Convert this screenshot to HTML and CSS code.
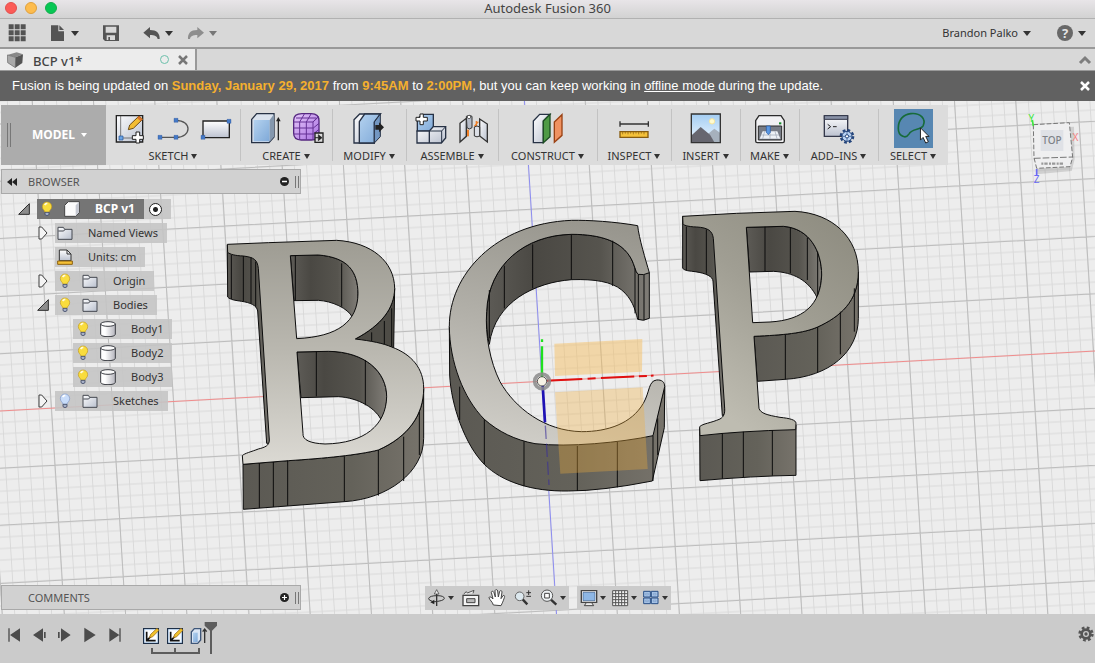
FILE: index.html
```html
<!DOCTYPE html>
<html lang="en">
<head>
<meta charset="utf-8">
<title>Autodesk Fusion 360</title>
<link rel="stylesheet" href="styles.css">
</head>
<body>
<svg class="defs" aria-hidden="true">
  <defs>
    <linearGradient id="blue" x1="0" y1="0" x2="1" y2="1"><stop offset="0" stop-color="#b4d2ef"/><stop offset="1" stop-color="#7fa9d8"/></linearGradient>
    <linearGradient id="pale" x1="0" y1="0" x2="1" y2="1"><stop offset="0" stop-color="#fdfdfe"/><stop offset="1" stop-color="#b9c0ce"/></linearGradient>
    <linearGradient id="sheet" x1="0" y1="0" x2="0" y2="1"><stop offset="0" stop-color="#ffffff"/><stop offset="1" stop-color="#bcc2d0"/></linearGradient>
    <linearGradient id="violet" x1="0" y1="0" x2="1" y2="1"><stop offset="0" stop-color="#e6c8fa"/><stop offset="1" stop-color="#a76ee0"/></linearGradient>
    <linearGradient id="sky" x1="0" y1="0" x2="0" y2="1"><stop offset="0" stop-color="#a3cdf2"/><stop offset="1" stop-color="#eff8ff"/></linearGradient>
    <linearGradient id="can" x1="0" y1="0" x2="1" y2="0"><stop offset="0" stop-color="#ffffff"/><stop offset=".3" stop-color="#ffffff"/><stop offset="1" stop-color="#b4b4bc"/></linearGradient>
  </defs>
  <symbol id="bulb" viewBox="0 0 36 48">
    <path d="M18 3a14 14 0 0 0-14 14c0 8 7 10 8 17h12c1-7 8-9 8-17A14 14 0 0 0 18 3Z" fill="#f9dc3c" stroke="#c39a1d" stroke-width="2"/>
    <path d="M11 12q3-5 8-5" fill="none" stroke="#fffbe0" stroke-width="5"/>
    <path d="M12 34h12v7q-6 6-12 0Z" fill="#a9b2c9" stroke="#3f4864" stroke-width="2.500"/>
  </symbol>
  <symbol id="bulb-off" viewBox="0 0 36 48">
    <path d="M18 3a14 14 0 0 0-14 14c0 8 7 10 8 17h12c1-7 8-9 8-17A14 14 0 0 0 18 3Z" fill="#c8dcfa" stroke="#7f96c6" stroke-width="2"/>
    <path d="M11 12q3-5 8-5" fill="none" stroke="#fff" stroke-width="5"/>
    <path d="M12 34h12v7q-6 6-12 0Z" fill="#a9b2c9" stroke="#3f4864" stroke-width="2.500"/>
  </symbol>
  <symbol id="folder" viewBox="0 0 48 48">
    <path d="M3 7h16l4 6h22v30H3Z" fill="url(#pale)" stroke="#444850" stroke-width="3" stroke-linejoin="round"/>
    <path d="M4 18h16l4-5" fill="none" stroke="#444850" stroke-width="3"/>
  </symbol>
  <symbol id="cylinder" viewBox="0 0 48 48">
    <path d="M2 9v31q2 7 22 7t22-7V9Z" fill="url(#can)" stroke="#3c3e44" stroke-width="3"/>
    <ellipse cx="24" cy="9" rx="22" ry="7" fill="#fafafa" stroke="#3c3e44" stroke-width="3"/>
  </symbol>
  <symbol id="closed" viewBox="0 0 30 42"><path d="M3 3v36h8L27 21 11 3Z" fill="#f4f4f4" stroke="#3c3c3c" stroke-width="3"/></symbol>
  <symbol id="open" viewBox="0 0 36 36"><path d="M34 2v32H2Z" fill="#8d8d8d" stroke="#2b2b2b" stroke-width="3"/></symbol>
</svg>

<header class="titlebar">
  <div class="lights"><i class="light red"></i><i class="light amber"></i><i class="light green"></i></div>
  <h1>Autodesk Fusion 360</h1>
</header>

<div class="appbar">
  <button class="tool" aria-label="Data panel"><svg width="18" height="18" viewBox="25 74 54 54"><path fill="#545454" d="M27 75h15v15H27zM45 75h15v15H45zM63 75h15v15H63zM27 93h15v15H27zM45 93h15v15H45zM63 93h15v15H63zM27 111h15v15H27zM45 111h15v15H45zM63 111h15v15H63z"/></svg></button>
  <button class="tool" aria-label="File"><svg width="18" height="18" viewBox="153 74 54 54"><path fill="#545454" d="M159 78h22v18h17v29h-39zM184 78l14 14h-14z"/></svg><span class="caret"></span></button>
  <button class="tool" aria-label="Save"><svg width="18" height="18" viewBox="309 74 54 54"><path fill="#545454" fill-rule="evenodd" d="M312 78h48v47h-42l-6-6zM320 82v18h32V82zM323 108v14h25v-14zM328 113h5v9h-5z"/></svg></button>
  <button class="tool" aria-label="Undo"><svg width="18" height="18" viewBox="430 74 54 54"><path fill="#545454" d="M431 100l20-17v9c20 0 30 10 29 27h-6c-2-9-9-12-23-12v10z"/></svg><span class="caret"></span></button>
  <button class="tool redo" aria-label="Redo"><svg width="18" height="18" viewBox="564 74 54 54"><path fill="#8e8e8e" d="M615 100l-20-17v9c-20 0-29 10-28 27h6c2-9 8-12 22-12v10z"/></svg><span class="caret dim"></span></button>
  <div class="account">
    <button class="tool">Brandon Palko<span class="caret"></span></button>
    <button class="tool help" aria-label="Help"><b class="question">?</b><span class="caret"></span></button>
  </div>
</div>

<div class="tabs">
  <div class="tab">
    <svg width="16" height="16" viewBox="21 153 48 48"><path d="M22 162l28-8 19 6-22 9z" fill="#888"/><path d="M22 162l25 7-1 31-23-15z" fill="#a9a9a9" stroke="#666" stroke-width="2"/><path d="M47 169l22-9-2 26-21 14z" fill="#555"/></svg>
    <span class="tab-name">BCP v1*</span>
    <i class="ring"></i>
    <button class="plain" aria-label="Close tab"><svg width="12" height="12" viewBox="0 0 12 12"><path d="M2 2l8 8M10 2l-8 8" stroke="#777" stroke-width="2.500"/></svg></button>
  </div>
  <button class="plain" aria-label="Collapse"><svg width="14" height="12" viewBox="0 0 14 12"><path d="M2 9l5-5 5 5" fill="none" stroke="#7d7d7d" stroke-width="3"/></svg></button>
</div>

<div class="banner">
  <p>Fusion is being updated on <b>Sunday, January 29, 2017</b> from <b>9:45AM</b> to <b>2:00PM</b>, but you can keep working in <a href="#offline">offline mode</a> during the update.</p>
  <button class="plain" aria-label="Dismiss"><svg width="12" height="12" viewBox="0 0 12 12"><path d="M2 2l8 8M10 2l-8 8" stroke="#fff" stroke-width="2.500"/></svg></button>
</div>

<main class="viewport">
  <svg class="scene" viewBox="0 101 1095 513" preserveAspectRatio="xMidYMid slice" role="img" aria-label="Three extruded letter bodies on a grid">
    <defs>
      <pattern id="minor" patternUnits="userSpaceOnUse" x="-6.130" y="-5.720" width="12.260" height="11.440" patternTransform="matrix(1 -.0548 .0625 1 541.500 381.300)">
        <path d="M6.130 0V11.440M0 5.720H12.260" stroke="#d8d8d8" stroke-width=".9"/>
      </pattern>
      <linearGradient id="faceB" x1="0" y1="0" x2="0" y2="1"><stop offset="0" stop-color="#9e9c93"/><stop offset=".5" stop-color="#bab8b0"/><stop offset="1" stop-color="#dbd9d3"/></linearGradient>
      <linearGradient id="faceC" x1=".6" y1="0" x2=".4" y2="1"><stop offset="0" stop-color="#98968e"/><stop offset=".5" stop-color="#b2b0a9"/><stop offset="1" stop-color="#cfcdc7"/></linearGradient>
      <linearGradient id="faceP" x1="1" y1="0" x2=".4" y2="1"><stop offset="0" stop-color="#8c8a7e"/><stop offset=".5" stop-color="#a09e93"/><stop offset="1" stop-color="#bebcb1"/></linearGradient>
      <linearGradient id="wall" x1="0" y1="0" x2="1" y2="0"><stop offset="0" stop-color="#5b5953"/><stop offset=".6" stop-color="#64625a"/><stop offset="1" stop-color="#77736b"/></linearGradient>
      <linearGradient id="inner" x1="0" y1="0" x2="1" y2="0"><stop offset="0" stop-color="#5d5b56"/><stop offset=".3" stop-color="#4a4843"/><stop offset=".7" stop-color="#56544e"/><stop offset="1" stop-color="#807d77"/></linearGradient>
    </defs>
    <rect y="101" width="1095" height="513" fill="#ededed"/>
    <rect y="101" width="1095" height="513" fill="url(#minor)"/>
    <g transform="matrix(1 -.0548 .0625 1 541.500 381.300)">
      <path d="M-552-330V280M-490-330V280M-429-330V280M-368-330V280M-306-330V280M-245-330V280M-184-330V280M-123-330V280M-61-330V280M61-330V280M123-330V280M184-330V280M245-330V280M306-330V280M368-330V280M429-330V280M490-330V280M552-330V280M-600-286H600M-600-229H600M-600-172H600M-600-114H600M-600-57H600M-600 57H600M-600 114H600M-600 172H600M-600 229H600" stroke="#bdbdbd"/>
    </g>
    <path d="M0 411L1095 351" stroke="#f08c8c"/>
    <path d="M524.500 101L556.500 614" stroke="#8c8cf0"/>

    <g transform="translate(215 225) scale(.33333)" stroke="#0c0c0c" stroke-width="3" stroke-linejoin="round">
      <path fill="url(#inner)" d="M37 60L38 216C45 224 60 226 80 229C105 233 125 240 128 258L155 655L165 655L150 90Z"/>
      <path fill="#4e4c46" d="M421 342C500 300 538 250 539 190L536 368Z"/>
      <path fill="url(#wall)" d="M84 718L85 853L388 830C520 822 626 740 626 640V490C626 570 580 635 490 675C430 690 330 700 220 707Z"/>
      <path fill="url(#inner)" d="M226 92L310 90C400 97 428 140 429 205C429 230 425 255 412 277C400 250 350 228 310 226L237 227Z"/>
      <path fill="url(#inner)" d="M246 381L340 379C450 380 515 440 515 515C515 540 511 565 501 590C485 550 430 518 370 515L258 518Z"/>
      <path fill="url(#faceB)" fill-rule="evenodd" d="M37 58L160 53L365 46C470 52 538 110 539 190C538 250 500 300 421 342C470 348 505 355 530 366C590 388 626 430 626 490C626 570 580 635 490 675C430 690 330 700 220 707L133 714L84 718L82 692C88 685 110 680 130 672C150 667 163 662 163 645L130 130C127 105 118 97 85 93C60 92 45 88 38 82ZM226 92L310 90C400 97 428 140 429 205C428 290 370 335 245 341ZM246 381L340 379C450 380 515 440 515 515C513 600 450 655 330 657C285 655 262 645 264 625Z"/>
      <path fill="none" d="M49 90V222M85 93V229M108 97V236M122 110V245M241 91V226M380 115V245M470 322V348M508 288V358M530 250V364M304 380V514M451 405V541M133 714V849M175 711V846M218 707V842M388 694V830M490 675V812M566 635V768M613 560V690"/>
    </g>

    <g transform="translate(435 205) scale(.33333)" stroke="#0c0c0c" stroke-width="3" stroke-linejoin="round">
      <path fill="url(#wall)" d="M43 365L44 510C48 600 90 720 148 778C200 830 290 860 400 858Q500 858 652 828L688 668L689 545L652 692L300 690Z"/>
      <path fill="url(#inner)" d="M155 320C160 180 270 90 410 88C500 88 560 110 588 160C600 182 600 200 610 208L643 203V340Q625 350 608 343C600 310 590 280 560 255C530 230 480 222 410 224C300 232 180 290 163 418C155 390 153 350 155 320Z"/>
      <path fill="url(#faceC)" d="M608 62C540 50 460 45 410 46C180 55 42 210 43 365C44 470 85 580 148 643C190 680 240 705 300 716C400 728 560 712 654 692L689 545C689 530 680 524 665 525C640 528 645 560 625 595C590 655 520 680 440 680C330 678 240 610 195 530C165 470 150 390 155 320C160 180 270 90 410 88C500 88 560 110 588 160C600 182 600 200 610 208Q626 212 643 203C632 165 612 100 608 62Z"/>
      <path fill="none" d="M163 255V400M208 182V310M293 118V250M409 88V224M533 107V243M600 190V325M610 208V343M627 210V346M74 545V645M148 643V778M267 709V844M427 723V858M547 711V847M654 692V828M668 640V750"/>
    </g>

    <g transform="translate(670 195) scale(.33333)" stroke="#0c0c0c" stroke-width="3" stroke-linejoin="round">
      <path fill="url(#inner)" d="M38 64V220C45 228 60 228 75 230C110 235 128 245 129 258L157 662L165 655L150 92Z"/>
      <path fill="url(#wall)" d="M252 424L262 559L345 553C480 545 565 470 565 370V230C565 320 510 365 443 396C400 415 340 420 252 424Z"/>
      <path fill="url(#wall)" d="M89 700L90 857Q250 843 378 841V690Z"/>
      <path fill="url(#inner)" d="M229 97L340 94C420 100 455 170 455 240Q453 280 441 307C415 255 370 232 310 229L239 231Z"/>
      <path fill="url(#faceP)" fill-rule="evenodd" d="M38 64L200 55L375 49C490 55 565 130 565 230C565 320 510 365 443 396C400 415 340 420 252 424L267 640C272 655 290 660 330 667C360 670 378 675 378 685L377 704Q210 708 90 722L89 695C100 685 120 685 150 672C162 665 165 655 164 640L130 130C127 108 115 98 80 96C50 95 40 90 39 86ZM229 97L340 94C420 100 455 170 455 240C452 330 400 375 300 381L248 383Z"/>
      <path fill="none" d="M49 95V226M109 103V236M285 95V229M361 98V235M412 128V255M443 170V300M346 419V553M443 396V531M511 350V478M553 280V410M157 715V851M220 710V846M307 706V842"/>
    </g>

    <g transform="translate(435 205) scale(.33333)">
      <path d="M358 416L622 402L621 500L360 513Z" fill="#f7b84a" fill-opacity=".42"/>
      <path d="M360 562L623 547L638 792L376 806Z" fill="#f0ac3c" fill-opacity=".34"/>
      <path d="M330 527L715 509" stroke="#e01010" stroke-width="6" stroke-dasharray="112 16 24 16 100 14 24 12 8 999"/>
      <path d="M321 520V424M321 411V403" stroke="#1fe01f" stroke-width="7"/>
      <path d="M323 540L330 652" stroke="#1f12b4" stroke-width="8"/>
      <path d="M331 662L342 840" stroke="#3a2f9a" stroke-width="4" stroke-dasharray="40 14" opacity=".6"/>
      <circle cx="321" cy="529" r="22" fill="none" stroke="#8a8a8a" stroke-width="11" opacity=".85"/>
      <circle cx="321" cy="529" r="14" fill="#f6f2e6" stroke="#555" stroke-width="3"/>
    </g>
  </svg>

  <div class="top-row">
    <nav class="ribbon" aria-label="Modeling tools">
      <button class="model"><i class="grip"></i><span>MODEL</span><span class="caret light-caret"></span></button>

      <button class="group"><span class="icons">
        <svg viewBox="342 38 96 96"><path d="M349 46h79v79h-79z" fill="url(#pale)" stroke="#222" stroke-width="4"/><path d="M362 47v66h66" fill="none" stroke="#444" stroke-width="2"/><path d="M357 107h12v12h-12z" fill="#6aa5e6" stroke="#214f96" stroke-width="2"/><path d="M385 88l4-14 28-27 11 10-28 27z" fill="#f3bd32" stroke="#6d4b13" stroke-width="3"/><path d="M411 53l6-6 11 10-6 6z" fill="#d9742c"/><path d="M408 95h11v11h11v11h-11v11h-11v-11h-11v-11h11z" fill="#fff" stroke="#222" stroke-width="3"/></svg>
        <svg viewBox="471 38 96 96"><path d="M480 111h48M528 60c48 0 48 51 0 51" fill="none" stroke="#555" stroke-width="4"/><path d="M474 105h12v12h-12zM522 105h12v12h-12zM522 54h12v12h-12z" fill="#4479c7" stroke="#2a4f92"/></svg>
        <svg viewBox="600 38 96 96"><path d="M609 62h79v50h-79z" fill="url(#sheet)" stroke="#222" stroke-width="4"/><path d="M603 105h12v12h-12zM681 57h12v12h-12z" fill="#4479c7" stroke="#2a4f92"/></svg>
      </span><span class="label">SKETCH<i class="caret"></i></span></button>

      <button class="group"><span class="icons">
        <svg viewBox="744 38 96 96"><path d="M752 57l15-17h52v70l-15 17h-52z" fill="#dbe3ee" stroke="#273245" stroke-width="4"/><path d="M758 59h48v64h-48z" fill="url(#blue)"/><path d="M806 59l13-17v67l-13 15z" fill="#8497ad"/><path d="M832 120V57" stroke="#222" stroke-width="4"/><path d="M825 63l7-13 7 13z" fill="#222"/></svg>
        <svg viewBox="875 38 96 96"><path d="M880 60q0-20 25-20h28q23 0 23 22v35q0 22-23 22h-30q-23 0-23-20z" fill="url(#violet)" stroke="#552780" stroke-width="4"/><path d="M881 65h57l18-17M881 83h58l17-14M881 101h58l17-14M898 118V65l14-24M918 118V65l14-24M938 118V65l16-17M887 53h60" fill="none" stroke="#643194" stroke-width="3"/><path d="M944 98h24v28h-24z" fill="#ddd" stroke="#222" stroke-width="4"/><path d="M944 112h10v-9l11 9-11 9v-9z" fill="#222" stroke="#222" stroke-width="2"/></svg>
      </span><span class="label">CREATE<i class="caret"></i></span></button>

      <button class="group"><span class="icons">
        <svg viewBox="100 38 96 96"><path d="M103 58l17-17h62l-18 24v63h-61z" fill="url(#pale)" stroke="#273245" stroke-width="4"/><path d="M119 64l16-23h47l-18 24v63h-45z" fill="url(#blue)" stroke="#273245" stroke-width="4"/><path d="M164 65l18-24v68l-18 19z" fill="#7397c2" stroke="#273245" stroke-width="3"/><path d="M167 74h11v-8l15 15-15 15v-8h-11z" fill="#222"/></svg>
      </span><span class="label">MODIFY<i class="caret"></i></span></button>

      <button class="group"><span class="icons">
        <svg viewBox="283 38 96 96"><path d="M290 93v-36l14-15h34v50z" fill="url(#blue)" stroke="#273245" stroke-width="4"/><path d="M289 92h37v36h-37zM326 92l12-13h37v34l-13 15h-36z" fill="url(#pale)" stroke="#273245" stroke-width="4"/><path d="M326 92h37v36M363 92l12-13" fill="none" stroke="#273245" stroke-width="3"/><path d="M298 41h10v10h12v11h-12v11h-10V62h-12V51h12z" fill="#fff" stroke="#222" stroke-width="3"/></svg>
        <svg viewBox="415 38 96 96"><path d="M445 88v20" stroke="#ee7f28" stroke-width="6"/><path d="M421 69l19-15v54l-19 17z" fill="url(#pale)" stroke="#333" stroke-width="4"/><path d="M440 48q9-6 17 0v34q-9 8-15 0z" fill="#b6bcc8" stroke="#333" stroke-width="3"/><circle cx="448" cy="50" r="5" fill="#fff" stroke="#333" stroke-width="2"/><path d="M470 62v18M476 64l-12 14" stroke="#ee7f28" stroke-width="4"/><path d="M480 56l23 15v54l-23-18z" fill="url(#pale)" stroke="#333" stroke-width="4"/><path d="M464 80q8-6 16 0v27q-8 5-16 0z" fill="#dcdfe6" stroke="#333" stroke-width="3"/></svg>
      </span><span class="label">ASSEMBLE<i class="caret"></i></span></button>

      <button class="group"><span class="icons">
        <svg viewBox="637 38 96 96"><path d="M641 62l19-20h31l-20 20v65h-30z" fill="url(#pale)" stroke="#273245" stroke-width="4"/><path d="M671 62l20-20v67l-20 18z" fill="#4e9a45" stroke="#1d4d23" stroke-width="4"/><path d="M704 65l23-22v62l-23 21z" fill="#ef9261" stroke="#9b4214" stroke-width="4"/></svg>
      </span><span class="label">CONSTRUCT<i class="caret"></i></span></button>

      <button class="group"><span class="icons">
        <svg viewBox="82 38 96 96"><path d="M88 71h85M88 63v16M173 63v16" stroke="#333" stroke-width="4"/><path d="M88 94h84v17H88z" fill="#f5c23b" stroke="#875c10" stroke-width="4"/><path d="M96 95v7M104 95v5M112 95v7M120 95v5M128 95v7M136 95v5M144 95v7M152 95v5M160 95v7" stroke="#875c10" stroke-width="2"/></svg>
      </span><span class="label">INSPECT<i class="caret"></i></span></button>

      <button class="group"><span class="icons">
        <svg viewBox="300 38 96 96"><path d="M304 41h87v86h-87z" fill="url(#sky)"/><circle cx="366" cy="63" r="8" fill="#fffbd0" stroke="#f5e49a" stroke-width="3"/><path d="M345 108l28-23 18 13v29h-46z" fill="#a6b1bd"/><path d="M305 105l27-25 28 23 14 24h-69z" fill="#66666f"/><path d="M304 41h87v86h-87z" fill="none" stroke="#333" stroke-width="4"/></svg>
      </span><span class="label">INSERT<i class="caret"></i></span></button>

      <button class="group"><span class="icons">
        <svg viewBox="492 38 96 96"><path d="M497 61l10-15h66l10 15v61q0 5-5 5h-76q-5 0-5-5z" fill="#f1f1f3" stroke="#2b2b2b" stroke-width="4"/><path d="M505 77h70v42h-70z" fill="#777c86" stroke="#2b2b2b" stroke-width="3"/><path d="M518 93h44l9 22h-62z" fill="#eef2f7"/><path d="M524 93l-6 22M540 93v22M555 93l6 22M514 104h53" stroke="#9aa3b2" stroke-width="2"/><path d="M529 77h12v19l-6 7-6-7z" fill="#5b98e2" stroke="#2556a0" stroke-width="2"/><path d="M567 66h7v6h-7z" fill="#168a2a"/></svg>
      </span><span class="label">MAKE<i class="caret"></i></span></button>

      <button class="group"><span class="icons">
        <svg viewBox="699 38 96 96"><path d="M703 46h70v62h-70z" fill="url(#sheet)" stroke="#34384a" stroke-width="4"/><path d="M703 46h70v11h-70z" fill="#8891a6" stroke="#34384a" stroke-width="3"/><path d="M713 72l9 7-9 7M729 79h11" fill="none" stroke="#222" stroke-width="3"/><circle cx="771" cy="108" r="18" fill="none" stroke="#24457c" stroke-width="8" stroke-dasharray="8 6"/><circle cx="771" cy="108" r="15" fill="#b9d3f4" stroke="#24457c" stroke-width="3"/><circle cx="771" cy="108" r="5" fill="#fff" stroke="#24457c" stroke-width="3"/><path d="M771 94v9M771 113v9M757 108h9M776 108h9" stroke="#24457c" stroke-width="2"/></svg>
      </span><span class="label">ADD–INS<i class="caret"></i></span></button>

      <button class="group selected"><span class="icons">
        <svg viewBox="909 27 118 118"><path d="M909 27h118v118H909z" fill="#5787b2"/><path d="M960 41c30-3 47 17 37 37-9 14-32 6-43 25-10 16-32 6-32-18 0-26 16-42 38-44z" fill="none" stroke="#176b3a" stroke-width="5"/><path d="M989 84v37l8-8 8 17 8-4-8-16h10z" fill="#fff" stroke="#222" stroke-width="3"/></svg>
      </span><span class="label">SELECT<i class="caret"></i></span></button>
    </nav>

    <svg class="viewcube" width="60" height="76" viewBox="795 330 180 228" role="img" aria-label="View cube, top">
      <path d="M828 384l114-4 2 97-9 36-104 10z" fill="#000" opacity=".12"/>
      <path d="M820 374l108-6 10 104-8 28-100 5-8-32z" fill="#efeff0" stroke="#777" stroke-width="3" stroke-dasharray="14 6"/>
      <path d="M842 390h68v63h-68z" fill="#dfe1e6"/>
      <path d="M822 475l116-4" stroke="#777" stroke-width="3" stroke-dasharray="20 6"/>
      <path d="M844 491h68" stroke="#999" stroke-width="7" stroke-dasharray="6 3 10 4"/>
      <text x="876" y="431" class="cube-face">TOP</text>
      <path d="M817 360l3 18" stroke="#3fe63f" stroke-width="5"/>
      <path d="M830 507v18" stroke="#6a6af5" stroke-width="5"/>
      <text x="814" y="366" class="cube-axis y">Y</text><text x="946" y="422" class="cube-axis x">X</text><text x="830" y="548" class="cube-axis z">Z</text>
    </svg>
  </div>

  <section class="browser">
    <header class="panel">
      <svg width="10" height="8" viewBox="0 0 10 8"><path d="M5 0v8L0 4zM10 0v8L5 4z" fill="#222"/></svg>
      <h2>BROWSER</h2>
      <button class="plain" aria-label="Hide browser"><svg width="9" height="9" viewBox="0 0 9 9"><circle cx="4.500" cy="4.500" r="4.500" fill="#222"/><path d="M2 4.500h5" stroke="#fff" stroke-width="1.500"/></svg></button>
      <i class="grip"></i>
    </header>
    <ul class="tree">
      <li class="root"><svg class="twist" width="12" height="12"><use href="#open"/></svg>
        <div class="node"><span class="active"><svg><use href="#bulb"/></svg><svg viewBox="0 0 48 48"><path d="M2 13L13 2h33v33L35 46H2Z" fill="#fcfcfc" stroke="#444" stroke-width="3"/><path d="M35 13L45 3v31L35 45Z" fill="#c6c9d2"/></svg><b>BCP v1</b></span><input type="radio" name="component" aria-label="Activate BCP v1" checked></div></li>
      <li><svg class="twist" width="10" height="14"><use href="#closed"/></svg><div class="node"><svg><use href="#folder"/></svg><span>Named Views</span></div></li>
      <li><i class="twist none"></i><div class="node"><svg viewBox="0 0 48 48"><path d="M7 3h23l12 12v20H7Z" fill="url(#sheet)" stroke="#333" stroke-width="3"/><path d="M30 3v12h12" fill="none" stroke="#333" stroke-width="3"/><path d="M2 36h44v10H2Z" fill="#f5c136" stroke="#8b6010" stroke-width="3"/></svg><span>Units: cm</span></div></li>
      <li><svg class="twist" width="10" height="14"><use href="#closed"/></svg><div class="node"><svg><use href="#bulb"/></svg><svg><use href="#folder"/></svg><span>Origin</span></div></li>
      <li><svg class="twist" width="12" height="12"><use href="#open"/></svg><div class="node"><svg><use href="#bulb"/></svg><svg><use href="#folder"/></svg><span>Bodies</span></div></li>
      <li class="leaf"><div class="node"><svg><use href="#bulb"/></svg><svg><use href="#cylinder"/></svg><span>Body1</span></div></li>
      <li class="leaf"><div class="node"><svg><use href="#bulb"/></svg><svg><use href="#cylinder"/></svg><span>Body2</span></div></li>
      <li class="leaf"><div class="node"><svg><use href="#bulb"/></svg><svg><use href="#cylinder"/></svg><span>Body3</span></div></li>
      <li><svg class="twist" width="10" height="14"><use href="#closed"/></svg><div class="node"><svg><use href="#bulb-off"/></svg><svg><use href="#folder"/></svg><span>Sketches</span></div></li>
    </ul>
  </section>

  <div class="bottom-row">
    <section class="panel">
      <h2 class="indent">COMMENTS</h2>
      <button class="plain" aria-label="Show comments"><svg width="9" height="9" viewBox="0 0 9 9"><circle cx="4.500" cy="4.500" r="4.500" fill="#222"/><path d="M2 4.500h5M4.500 2v5" stroke="#fff" stroke-width="1.200"/></svg></button>
      <i class="grip"></i>
    </section>
    <div class="navtools">
      <div class="strip nav">
        <button class="plain" aria-label="Orbit"><svg viewBox="53 57 54 54"><path d="M79 108V64" stroke="#333" stroke-width="4"/><path d="M72 72l7-13 7 13z" fill="#eee" stroke="#333" stroke-width="2"/><path d="M66 94q-12-3-11-9 4-8 25-8t22 8q0 8-36 11" fill="none" stroke="#333" stroke-width="3"/><path d="M60 97l12-8v14z" fill="#222"/></svg><i class="caret"></i></button>
        <button class="plain" aria-label="Look at"><svg viewBox="150 57 54 54"><path d="M153 76h47v31h-47z" fill="#f4f4f4" stroke="#444" stroke-width="4"/><path d="M164 86h25v12h-25z" fill="#bbb" stroke="#444" stroke-width="3"/><path d="M155 72l8-7 3 4 20-8-3 9" fill="#eee" stroke="#555" stroke-width="3"/></svg></button>
        <button class="plain" aria-label="Pan"><svg viewBox="229 57 54 54"><path d="M245 105c-2-9-12-16-13-22 1-4 6-3 12 4l-5-20c1-5 6-4 8 1l4 13-1-19c2-5 7-4 8 1l2 18 4-17c3-4 7-2 7 2l-3 20 6-9c4-2 6 1 4 6-4 12-6 16-10 24z" fill="#fff" stroke="#444" stroke-width="3"/></svg></button>
        <button class="plain" aria-label="Zoom"><svg viewBox="306 57 54 54"><path d="M332 88l14 15" stroke="#333" stroke-width="7"/><circle cx="323" cy="79" r="13" fill="#dce8ee" stroke="#666" stroke-width="3"/><path d="M343 68h14M350 61v14M343 79h14" stroke="#333" stroke-width="3"/></svg></button>
        <button class="plain" aria-label="Fit"><svg viewBox="384 57 54 54"><path d="M416 88l17 16" stroke="#333" stroke-width="7"/><circle cx="405" cy="77" r="17" fill="#edf1f3" stroke="#555" stroke-width="3"/><path d="M398 70h14v14h-14z" fill="#fff" stroke="#444" stroke-width="3"/></svg><i class="caret"></i></button>
      </div>
      <div class="strip display">
        <button class="plain" aria-label="Display settings"><svg viewBox="507 57 54 54"><path d="M511 62h46v35h-46z" fill="#fff" stroke="#444" stroke-width="4"/><path d="M516 67h36v25h-36z" fill="#8eb7e5" stroke="#365b8a" stroke-width="2"/><path d="M526 98h16l6 9h-28z" fill="#eee" stroke="#444" stroke-width="3"/></svg><i class="caret"></i></button>
        <button class="plain" aria-label="Grid settings"><svg viewBox="600 57 54 54"><path d="M605 62h45v45h-45z" fill="#f3f3f3"/><path d="M605 62h45v45h-45zM614 62v45M623 62v45M632 62v45M641 62v45M605 71h45M605 80h45M605 89h45M605 98h45" fill="none" stroke="#555" stroke-width="3"/></svg><i class="caret"></i></button>
        <button class="plain" aria-label="Viewports"><svg viewBox="692 57 54 54"><path d="M697 64h20v17h-20zM720 64h20v17h-20zM697 84h20v17h-20zM720 84h20v17h-20z" fill="#a8c5e8" stroke="#284f86" stroke-width="3"/><path d="M703 70h8v5h-8zM726 70h8v5h-8zM703 90h8v5h-8zM726 90h8v5h-8z" fill="none" stroke="#7f9fc9" stroke-width="2"/></svg><i class="caret"></i></button>
      </div>
    </div>
  </div>
</main>

<footer class="timeline">
  <div class="playback">
    <button class="plain" aria-label="Go to start"><svg viewBox="21 156 48 48"><path d="M25 160h4v40h-4zM60 160v40l-30-20z" fill="#4c4c4c"/></svg></button>
    <button class="plain" aria-label="Step back"><svg viewBox="93 156 48 48"><path d="M126 160v40l-30-20zM129 171h5v18h-5z" fill="#4c4c4c"/></svg></button>
    <button class="plain" aria-label="Step forward"><svg viewBox="168 156 48 48"><path d="M171 171h5v18h-5zM180 160v40l29-20z" fill="#4c4c4c"/></svg></button>
    <button class="plain" aria-label="Play"><svg viewBox="243 156 48 48"><path d="M250 158v44l34-22z" fill="#4c4c4c"/></svg></button>
    <button class="plain" aria-label="Go to end"><svg viewBox="318 156 48 48"><path d="M325 160v40l30-20zM355 160h4v40h-4z" fill="#4c4c4c"/></svg></button>
  </div>
  <svg class="history" width="80" height="35" viewBox="423 138 240 105" role="img" aria-label="History: sketch, sketch, extrude">
    <g id="step"><path d="M431 161h44v44h-44z" fill="#fff" stroke="#1e3048" stroke-width="4"/><path d="M434 164h38v38h-38z" fill="none" stroke="#b9d4f0" stroke-width="3"/><path d="M440 170v27h27M440 197l14-14" fill="none" stroke="#111" stroke-width="5"/><path d="M448 189l4-11 19-18 6 6-19 19z" fill="#f2c22b" stroke="#8a5c14" stroke-width="2"/></g>
    <use href="#step" x="72"/>
    <path d="M574 171l9-10h19v34l-9 10h-19z" fill="#dbe6f4" stroke="#3e5678" stroke-width="4"/><path d="M579 173h14v28h-14z" fill="url(#blue)"/><path d="M614 204v-38M608 170l6-8 6 8" fill="none" stroke="#333" stroke-width="4"/>
    <path d="M456 219v15h141v-15M525 219v15" fill="none" stroke="#5d5d5d" stroke-width="6"/>
    <path d="M614 141h37v11l-15 15v70h-6v-70l-16-15z" fill="#5d5d5d"/>
  </svg>
  <button class="plain gear" aria-label="Settings"><svg viewBox="-24 -24 48 48"><circle r="13" fill="none" stroke="#555" stroke-width="8"/><circle r="19" fill="none" stroke="#555" stroke-width="8" stroke-dasharray="8 6.920"/><circle r="5" fill="#555"/></svg></button>
</footer>
</body>
</html>
```
FILE: styles.css
```css
* { box-sizing: border-box; }

body {
  margin: 0;
  min-height: 100vh;
  display: flex;
  flex-direction: column;
  background: #ededed;
  color: #333;
  font: 11px/16px "Noto Sans", "Open Sans", sans-serif;
  overflow: hidden;
}

button {
  margin: 0;
  padding: 0;
  border: 0;
  background: none;
  color: inherit;
  font: inherit;
}

svg { display: block; flex: none; }
h1, h2, p, ul { margin: 0; padding: 0; font: inherit; }
.defs { position: absolute; width: 0; height: 0; }
.plain { display: flex; align-items: center; }

.caret {
  display: inline-block;
  flex: none;
  border: 4px solid transparent;
  border-top: 5px solid #333;
  border-bottom: 0;
}
.caret.dim { border-top-color: #777; }
.caret.light-caret { border-width: 4px 3px 0; border-top-color: #fff; }

/* Window title */
.titlebar {
  position: relative;
  height: 19px;
  background: linear-gradient(#e8e5e8, #d2d2d2);
  border-bottom: 1px solid #b1b1b1;
}
.titlebar h1 { text-align: center; font-size: 13px; line-height: 17px; color: #444; }
.lights { position: absolute; left: 5px; top: 2px; display: flex; gap: 8px; }
.light { width: 12px; height: 12px; border-radius: 50%; }
.red { background: #fc5b57; border: 1px solid #e2504d; }
.amber { background: #fdbc4e; border: 1px solid #e0a03c; }
.green { background: #07c754; border: 1px solid #13ad4c; }

/* Application bar */
.appbar {
  display: flex;
  align-items: center;
  gap: 23px;
  height: 30px;
  padding: 0 9px 0 8px;
  background: #d8d8d8;
  border-bottom: 2px solid #999;
}
.tool { display: flex; align-items: center; gap: 4px; }
.redo { margin-left: -9px; }
.account { display: flex; gap: 26px; margin-left: auto; color: #333; }
.account .tool { gap: 5px; }
.question {
  width: 16px;
  height: 16px;
  border-radius: 50%;
  background: #686868;
  color: #e4e4e4;
  text-align: center;
  font-size: 13px;
}

/* Document tabs */
.tabs {
  display: flex;
  justify-content: space-between;
  height: 22px;
  padding-right: 3px;
  background: #d8d8d8;
  border-bottom: 1px solid #999;
}
.tab {
  display: flex;
  align-items: center;
  width: 197px;
  padding: 0 6px 0 7px;
  background: #ececec;
  border-right: 2px solid #999;
}
.tab-name { margin: 2px auto 0 10px; font-weight: 500; color: #444; font-size: 13px; }
.ring { width: 9px; height: 9px; margin-right: 8px; border: 1px solid #6cc0ab; border-radius: 50%; }

/* Update notice */
.banner {
  display: flex;
  align-items: center;
  justify-content: space-between;
  min-height: 30px;
  padding: 0 4px 0 12px;
  background: #616161;
  color: #fff;
  font: 13px/16px "Liberation Sans", Arial, sans-serif;
}
.banner b { color: #f4b02e; }
.banner a { color: inherit; }

/* Modeling canvas */
.viewport {
  position: relative;
  flex: 1;
  display: flex;
  flex-direction: column;
  padding: 4px 0 4px 1px;
}
.scene { position: absolute; left: 0; top: 0; width: 100%; height: 100%; }
.top-row, .browser, .bottom-row { position: relative; }
.top-row { display: flex; justify-content: space-between; height: 64px; padding-right: 10px; }
.viewcube { margin-top: 5px; overflow: visible; }
.cube-face { font-size: 30px; font-weight: 500; fill: #7d8187; text-anchor: middle; }
.cube-axis { font-size: 30px; text-anchor: middle; }
.cube-axis.x { fill: #f58080; }
.cube-axis.y { fill: #3fe63f; }
.cube-axis.z { fill: #6a6af5; }

.ribbon {
  display: grid;
  grid-template-columns: 105px 134px 92px 74px 92px 99px 74px 69px 59px 79px 70px;
  height: 60px;
  background: #dcdcdc;
}
.model {
  display: flex;
  align-items: center;
  gap: 6px;
  padding-left: 6px;
  background: #acacac;
  color: #fff;
  font-size: 12px;
  font-weight: 700;
}
.model .grip { height: 24px; margin-right: 15px; }
.grip { width: 4px; height: 12px; border: solid #777; border-width: 0 1px; }
.group {
  position: relative;
  display: flex;
  flex-direction: column;
  align-items: center;
  padding-top: 8px;
}
.group + .group::before {
  content: "";
  position: absolute;
  left: 0;
  top: 4px;
  bottom: 4px;
  width: 1px;
  background: #c3c3c3;
}
.icons { display: flex; gap: 11px; }
.icons svg { width: 32px; height: 32px; }
.label { display: flex; align-items: center; gap: 3px; margin-top: 3px; white-space: nowrap; }
.label .caret { border-width: 5px 3px 0; }
.selected { padding-top: 4px; }
.selected svg { width: 39px; height: 39px; }
.selected .label { margin-top: 0; }

.panel {
  display: flex;
  align-items: center;
  width: 300px;
  height: 25px;
  padding: 0 1px 0 5px;
  background: #d1d1d1;
  border: 1px solid #a9a9a9;
  color: #555;
}
.panel h2 { margin: 0 auto 0 11px; }
.panel h2.indent { margin-left: 21px; }
.panel .grip { margin-left: 6px; }

.tree { list-style: none; padding: 3px 0 0 36px; }
.tree li { display: flex; align-items: center; height: 24px; }
.tree .root { margin-left: -19px; }
.tree .leaf { padding-left: 36px; }
.twist { margin-right: 6px; width: 12px; }
.root .twist { margin-right: 7px; }
.node {
  display: flex;
  align-items: center;
  gap: 5px;
  height: 20px;
  padding-right: 9px;
  background: rgba(196, 196, 196, .88);
}
.node svg { width: 20px; height: 16px; }
.node > span, .node b { margin-left: 8px; }
.node b { font-size: 12px; }
.node .active {
  display: flex;
  align-items: center;
  gap: 5px;
  height: 20px;
  margin: 0;
  padding-right: 9px;
  background: #757575;
  color: #fff;
}
.node input {
  appearance: none;
  width: 13px;
  height: 13px;
  margin: 0;
  border: 1px solid #222;
  border-radius: 50%;
  background: radial-gradient(circle, #222 0 2px, #fff 3px);
}

.bottom-row {
  display: grid;
  grid-template-columns: 1fr auto 1fr;
  align-items: center;
  margin-top: auto;
}
.navtools { display: flex; gap: 8px; }
.strip { display: flex; align-items: center; height: 24px; padding: 0 3px; background: #cbcbcb; }
.strip svg { width: 18px; height: 18px; }
.nav { gap: 8px; }
.display { gap: 5px; }
.strip .caret { margin-left: 2px; border-width: 4px 3px 0; }

/* Design timeline */
.timeline {
  display: flex;
  align-items: flex-start;
  height: 49px;
  padding: 7px 1px 0 7px;
  background: #cbcbcb;
}
.playback { display: flex; gap: 9px; padding-top: 6px; }
.playback svg, .gear svg { width: 16px; height: 16px; }
.history { margin-left: 18px; }
.gear { margin: 5px 0 0 auto; }
```
